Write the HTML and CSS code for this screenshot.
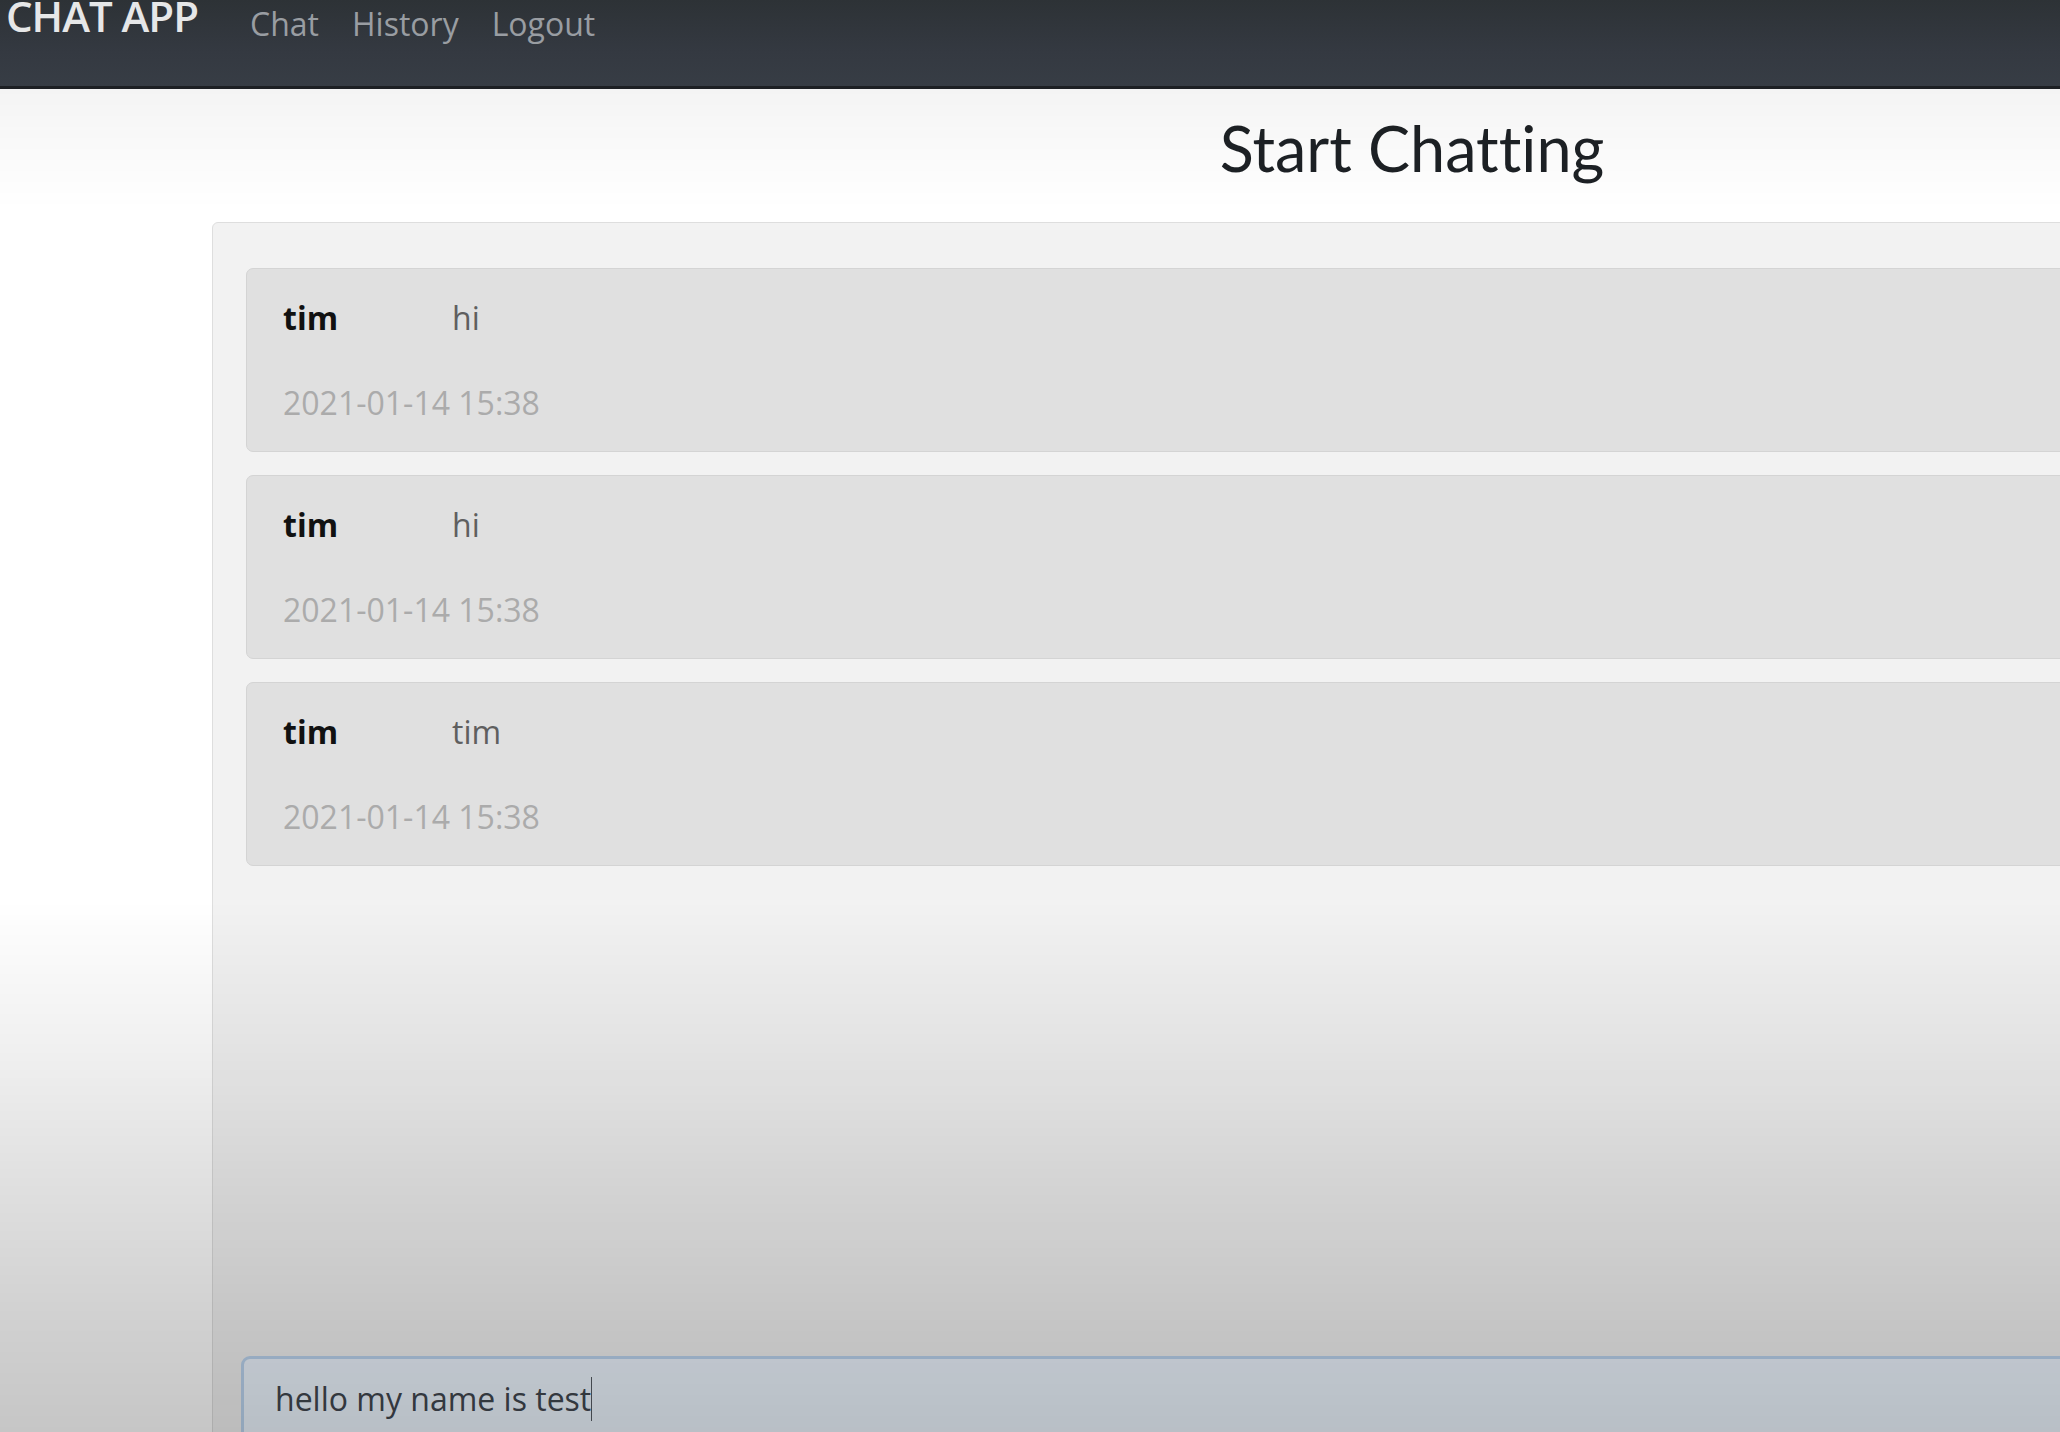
FILE: index.html
```html
<!DOCTYPE html>
<html lang="en">
<head>
<meta charset="utf-8">
<title>Chat App</title>
<link rel="stylesheet" href="styles.css">
</head>
<body>
<nav class="navbar">
  <a class="brand" href="#">CHAT APP</a>
  <ul class="nav-links">
    <li><a href="#">Chat</a></li>
    <li><a href="#">History</a></li>
    <li><a href="#">Logout</a></li>
  </ul>
</nav>
<main class="container">
  <h1 class="title">Start Chatting</h1>
  <section class="panel">
    <div class="messages">
      <div class="message">
        <div class="row"><span class="name">tim</span><span class="text">hi</span></div>
        <div class="time">2021-01-14 15:38</div>
      </div>
      <div class="message">
        <div class="row"><span class="name">tim</span><span class="text">hi</span></div>
        <div class="time">2021-01-14 15:38</div>
      </div>
      <div class="message">
        <div class="row"><span class="name">tim</span><span class="text">tim</span></div>
        <div class="time">2021-01-14 15:38</div>
      </div>
    </div>
    <div class="composer">
      <div class="input"><span class="typed">hello my name is test</span><span class="caret"></span></div>
    </div>
  </section>
</main>
<div class="shade-top"></div>
<div class="shade-bottom"></div>
</body>
</html>
```

FILE: styles.css
```css
html, body {
  margin: 0;
  padding: 0;
  overflow: hidden;
  height: 100%;
  background: #ffffff;
  font-family: "Open Sans", "Noto Sans", sans-serif;
}

.navbar {
  display: flex;
  align-items: flex-start;
  height: 86px;
  padding-left: 6px;
  background: linear-gradient(to bottom, #2d3236 0%, #343941 60%, #373d45 100%);
  border-bottom: 3px solid #1d2024;
  overflow: hidden;
}

.brand {
  font-size: 42px;
  line-height: 30px;
  font-weight: 600;
  color: #e6e7e8;
  text-decoration: none;
  margin-top: 1px;
  margin-right: 19px;
  letter-spacing: -1px;
  white-space: nowrap;
}

.nav-links {
  display: flex;
  gap: 33px;
  list-style: none;
  margin: 8px 0 0 33px;
  padding: 0;
}

.nav-links a {
  font-size: 32px;
  line-height: 32px;
  color: #999da2;
  text-decoration: none;
}

.container {
  width: 2400px;
  margin-left: 212px;
}

.title {
  font-family: "Lato", "Open Sans", sans-serif;
  font-variant-ligatures: none;
  font-weight: 400;
  font-size: 63px;
  line-height: 76.8px;
  color: #1d2125;
  text-align: center;
  margin: 21px 0 35px 0;
}

.panel {
  background: #f2f2f2;
  border: 1px solid #dedede;
  border-radius: 6px;
  padding: 45px 33px 0 33px;
  height: 1400px;
}

.messages {
  display: flex;
  flex-direction: column;
  gap: 23px;
  height: 1088px;
}

.message {
  background: #e0e0e0;
  border: 1px solid #d4d4d4;
  border-radius: 7px;
  padding: 25px 36px 24px 36px;
  height: 184px;
  box-sizing: border-box;
  font-size: 32px;
  line-height: 48px;
}

.row {
  display: flex;
}

.name {
  width: 169px;
  font-weight: 700;
  color: #111111;
}

.text {
  color: #5f5f5f;
}

.time {
  margin-top: 37px;
  color: #ababab;
}

.composer {
  margin-left: -5px;
}

.input {
  display: flex;
  align-items: flex-start;
  height: 120px;
  box-sizing: border-box;
  background: #eef6ff;
  border: 3px solid #bcd5f0;
  border-radius: 9px;
  padding: 16px 31px;
  font-size: 32px;
  line-height: 48px;
  color: #41474f;
}

.caret {
  display: inline-block;
  width: 1px;
  height: 44px;
  margin-top: 2px;
  background: #555b63;
}

.shade-top {
  position: fixed;
  left: 0;
  right: 0;
  top: 89px;
  height: 120px;
  pointer-events: none;
  background: linear-gradient(to bottom, rgba(0,0,0,0.045), rgba(0,0,0,0));
}

.shade-bottom {
  position: fixed;
  left: 0;
  right: 0;
  top: 900px;
  bottom: 0;
  pointer-events: none;
  background: linear-gradient(to bottom, rgba(0,0,0,0) 0%, rgba(0,0,0,0.06) 28%, rgba(0,0,0,0.12) 53%, rgba(0,0,0,0.18) 78%, rgba(0,0,0,0.225) 100%);
}
```
